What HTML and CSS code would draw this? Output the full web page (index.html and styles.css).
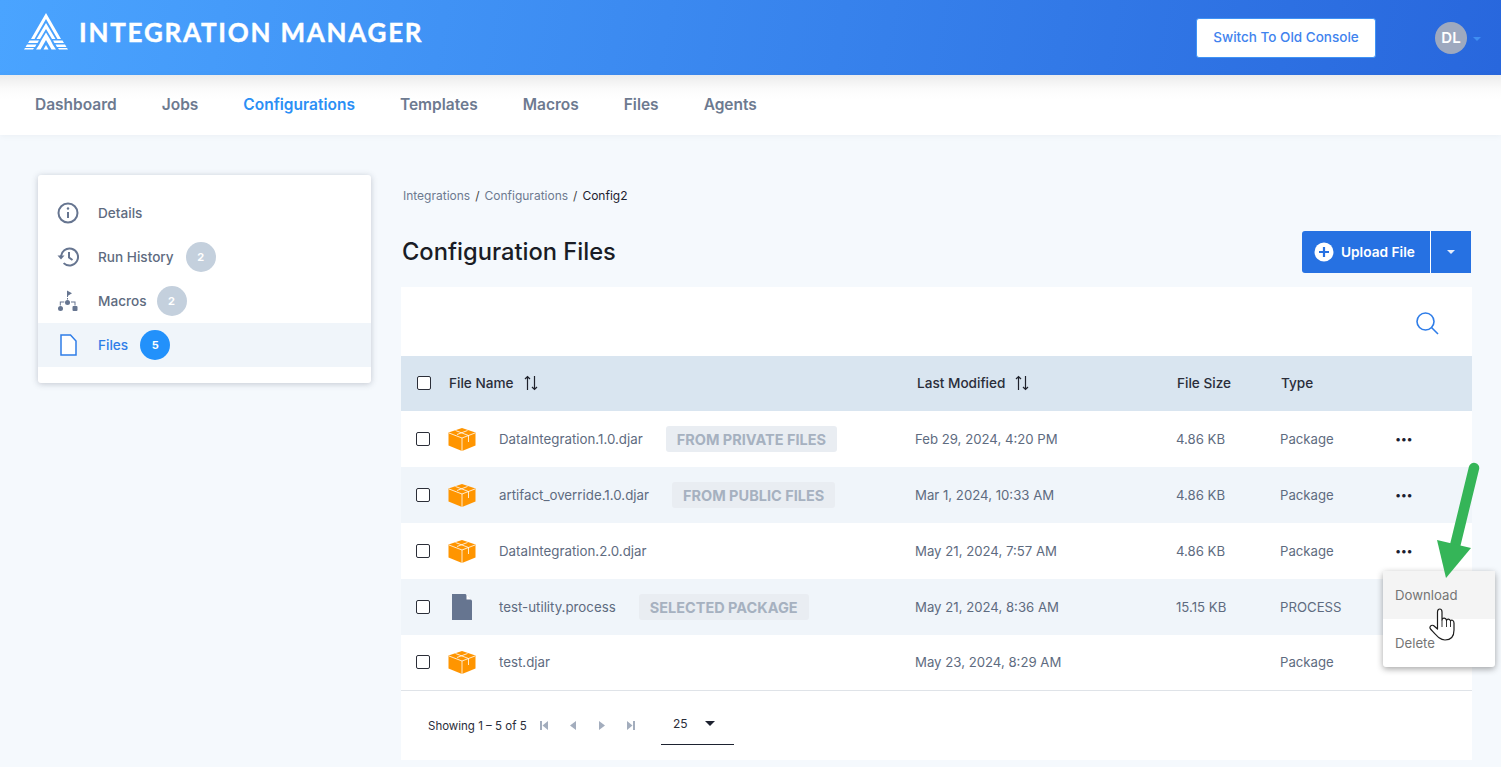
FILE: index.html
```html
<!DOCTYPE html>
<html lang="en">
<head>
<meta charset="utf-8">
<title>Integration Manager</title>
<link rel="stylesheet" href="styles.css">
</head>
<body>
<header class="topbar">
  <div class="brand">
    <svg class="brand-mark" width="44" height="38" viewBox="0 0 44 38" fill="#fff">
      <path d="M22 0 L37 26 L33.5 26 L22 6 L10.500 26 L7 26 Z"/>
      <path d="M22 10 L31.500 26 L28 26 L22 16 L16 26 L12.500 26 Z"/>
      <path d="M5.500 27.500 H15 L13.500 30 H4 Z M29 27.500 H38.500 L40 30 H30.500 Z"/>
      <path d="M3 31.500 H12.500 L11 34 H1.500 Z M31.500 31.500 H41 L42.500 34 H33 Z"/>
      <path d="M1 35 H10 L9 36.500 H0 Z M34 35 H43 L44 36.500 H35 Z"/>
      <path d="M22 19.500 L26.500 27 L29 32 L32 36.500 H27.500 L22 27 L16.500 36.500 H12 L15 32 L17.500 27 Z"/>
      <path d="M22 32 L24.500 36.500 H19.500 Z"/>
    </svg>
    <span class="brand-name">INTEGRATION MANAGER</span>
  </div>
  <div class="top-actions">
    <button class="old-console">Switch To Old Console</button>
    <div class="user">
      <span class="avatar">DL</span>
      <span class="user-caret"></span>
    </div>
  </div>
</header>

<nav class="mainnav">
  <a>Dashboard</a>
  <a>Jobs</a>
  <a class="active">Configurations</a>
  <a>Templates</a>
  <a>Macros</a>
  <a>Files</a>
  <a>Agents</a>
</nav>

<main class="page">
  <aside class="sidecard">
    <div class="side-item">
      <svg class="side-icon" width="22" height="22" viewBox="0 0 22 22" fill="none" stroke="#667590" stroke-width="2"><circle cx="11" cy="11" r="9.500"/><path d="M11 10v6"/><circle cx="11" cy="6.500" r="1.200" fill="#667590" stroke="none"/></svg>
      <span>Details</span>
    </div>
    <div class="side-item">
      <svg class="side-icon" width="22" height="22" viewBox="0 0 22 22" fill="none" stroke="#667590" stroke-width="2"><path d="M4 11a8.500 8.500 0 1 1 2.600 6.100"/><path d="M0.500 9.500 L4 13.500 L7.500 9.500" fill="#667590" stroke="none"/><path d="M12 6v5.500l3.500 2.500"/></svg>
      <span>Run History</span>
      <span class="count">2</span>
    </div>
    <div class="side-item">
      <svg class="side-icon" width="22" height="22" viewBox="0 0 22 22" fill="#667590"><path d="M10 0.500l5 2.800-4 2.400V7h-1z"/><circle cx="10.500" cy="12.500" r="2.500"/><rect x="15.500" y="16" width="5" height="5" rx="1"/><circle cx="3.500" cy="18.500" r="2.500"/><path d="M2.800 15.500v-4h4.500v1H3.800v3zM14 11.500h3.500v0h1v4h-1v-3H14zM10 8h1v1.500h-1z"/></svg>
      <span>Macros</span>
      <span class="count tight">2</span>
    </div>
    <div class="side-item selected">
      <svg class="side-icon" width="22" height="22" viewBox="0 0 22 22" fill="none" stroke="#2f7de8" stroke-width="1.500"><path d="M4 1h9.500L19 7v14H4z" fill="#fff"/></svg>
      <span>Files</span>
      <span class="count blue">5</span>
    </div>
  </aside>

  <section class="content">
    <div class="crumbs"><span>Integrations</span><i>/</i><span>Configurations</span><i>/</i><b>Config2</b></div>
    <div class="title-row">
      <h1>Configuration Files</h1>
      <div class="upload">
        <button class="upload-main">
          <svg width="20" height="20" viewBox="0 0 20 20"><circle cx="10" cy="10" r="9.500" fill="#fff"/><path d="M10 5v10M5 10h10" stroke="#2671e2" stroke-width="2.200"/></svg>
          Upload File
        </button>
        <button class="upload-caret"><span></span></button>
      </div>
    </div>

    <div class="panel">
      <div class="tools">
        <svg width="24" height="24" viewBox="0 0 24 24" fill="none" stroke="#2f7de8" stroke-width="1.600"><circle cx="10.500" cy="10.500" r="8.500"/><path d="M16.500 16.500L23 23"/></svg>
      </div>
      <div class="row head">
        <span class="check"></span>
        <span class="col-name">File Name <svg class="sort" width="16" height="16" viewBox="0 0 16 16" fill="none" stroke="#1f222c" stroke-width="1.200"><path d="M4.500 15V1.500M2 4l2.500-2.500L7 4M11.500 1v13.500M9 12l2.500 2.500L14 12"/></svg></span>
        <span class="col-mod">Last Modified <svg class="sort wide" width="16" height="16" viewBox="0 0 16 16" fill="none" stroke="#1f222c" stroke-width="1.200"><path d="M4.500 15V1.500M2 4l2.500-2.500L7 4M11.500 1v13.500M9 12l2.500 2.500L14 12"/></svg></span>
        <span>File Size</span>
        <span>Type</span>
        <span></span>
      </div>

      <div class="row">
        <span class="check"></span>
        <svg class="ficon" width="28" height="23" viewBox="0 0 28 23"><use href="#pkg"/></svg>
        <span class="name"><span>DataIntegration.1.0.djar</span><em>FROM PRIVATE FILES</em></span>
        <span>Feb 29, 2024, 4:20 PM</span><span>4.86 KB</span><span>Package</span><span class="dots">•••</span>
      </div>
      <div class="row alt">
        <span class="check"></span>
        <svg class="ficon" width="28" height="23" viewBox="0 0 28 23"><use href="#pkg"/></svg>
        <span class="name"><span>artifact_override.1.0.djar</span><em>FROM PUBLIC FILES</em></span>
        <span>Mar 1, 2024, 10:33 AM</span><span>4.86 KB</span><span>Package</span><span class="dots">•••</span>
      </div>
      <div class="row">
        <span class="check"></span>
        <svg class="ficon" width="28" height="23" viewBox="0 0 28 23"><use href="#pkg"/></svg>
        <span class="name"><span>DataIntegration.2.0.djar</span></span>
        <span>May 21, 2024, 7:57 AM</span><span>4.86 KB</span><span>Package</span><span class="dots">•••</span>
      </div>
      <div class="row alt">
        <span class="check"></span>
        <svg class="ficon doc" width="20" height="26" viewBox="0 0 20 26"><path d="M0 0h13.500L20 6.500V26H0z" fill="#667590"/><path d="M14.500 0.500L19.500 5.500H14.500z" fill="#fff"/></svg>
        <span class="name"><span>test-utility.process</span><em>SELECTED PACKAGE</em></span>
        <span>May 21, 2024, 8:36 AM</span><span>15.15 KB</span><span>PROCESS</span><span></span>
      </div>
      <div class="row last">
        <span class="check"></span>
        <svg class="ficon" width="28" height="23" viewBox="0 0 28 23"><use href="#pkg"/></svg>
        <span class="name"><span>test.djar</span></span>
        <span>May 23, 2024, 8:29 AM</span><span></span><span>Package</span><span></span>
      </div>

      <div class="pager">
        <span class="showing">Showing 1 – 5 of 5</span>
        <div class="pager-btns">
          <svg width="8" height="9" viewBox="0 0 8 9" fill="#a3adbd"><path d="M0 0h2v9H0zM8 0v9L2.500 4.500z"/></svg>
          <svg width="8" height="9" viewBox="0 0 8 9" fill="#a3adbd"><path d="M7 0v9L1 4.500z"/></svg>
          <svg width="8" height="9" viewBox="0 0 8 9" fill="#a3adbd"><path d="M1 0v9l6-4.500z"/></svg>
          <svg width="8" height="9" viewBox="0 0 8 9" fill="#a3adbd"><path d="M0 0v9l5.500-4.500zM6 0h2v9H6z"/></svg>
        </div>
        <div class="size-select"><span>25</span><i></i></div>
      </div>
    </div>
  </section>
</main>

<div class="menu">
  <div class="menu-item hover">Download</div>
  <div class="menu-item">Delete</div>
</div>

<svg class="arrow" width="46" height="124" viewBox="0 0 46 124">
  <path d="M40 12 L21 90" stroke="#35b558" stroke-width="10.500" stroke-linecap="round" fill="none"/>
  <path d="M3 84 L37 92 L12 122 Z" fill="#35b558"/>
</svg>

<svg class="hand" width="26" height="33" viewBox="0 0 26 33">
  <path d="M8.500 21 V4 C8.500 0 13 0 13 4 V12 C13.500 9.500 17 9.500 17.500 12.500 C18 10.500 21 10.500 21.500 13 C22 11.500 25 12 25 15 V22 C25 28 22 32 16 32 C11 32 8 28 1.500 21 C0 19 2 16.500 4.500 17.500 Z" fill="#fff" stroke="#1c1c1c" stroke-width="1.200" stroke-linejoin="round"/>
  <path d="M13 12v7M17.500 12.500v6.500M21.500 13v6" stroke="#1c1c1c" stroke-width=".9" fill="none"/>
</svg>

<svg class="defs" width="0" height="0">
  <defs>
    <g id="pkg">
      <path d="M14 0 L27.500 4.500 V17.500 L14 23 L0.500 17.500 V4.500 Z" fill="#ff9500"/>
      <path d="M1 5 L14 10 L27 5 M14 10 V23 M7.500 2.500 L20.500 7.500 V14 M19.500 2.500 L9 6.500" stroke="#fff" stroke-width="1" fill="none" opacity=".8"/>
    </g>
  </defs>
</svg>
</body>
</html>
```
FILE: styles.css
```css
* { box-sizing: border-box; }
html, body { margin: 0; padding: 0; }
body {
  position: relative;
  width: 1501px;
  height: 767px;
  overflow: hidden;
  background: #f5f9fd;
  font-family: "Inter", "Noto Sans", sans-serif;
  color: #5e6b80;
}
button { font-family: inherit; cursor: pointer; }

.topbar {
  height: 75px;
  display: flex;
  justify-content: space-between;
  align-items: center;
  padding: 0 20px 0 24px;
  background: linear-gradient(100deg, #4aa4ff 0%, #2867dd 100%);
}
.brand { display: flex; align-items: center; gap: 11px; margin-top: -11px; }
.brand-mark { display: block; }
.brand-name {
  font-family: "Lato", sans-serif;
  font-weight: 700;
  font-size: 26px;
  letter-spacing: 1.750px;
  color: #fff;
  line-height: 38px;
  -webkit-text-stroke: .4px #fff;
}
.top-actions { display: flex; align-items: center; }
.old-console {
  width: 180px;
  height: 40px;
  padding: 0 0 2px;
  border: 1px solid #3f93f5;
  border-radius: 3px;
  background: #fff;
  color: #3f83ee;
  font-size: 13.500px;
  font-weight: 500;
}
.user { display: flex; align-items: center; margin-left: 59px; }
.avatar {
  width: 32px;
  height: 32px;
  border-radius: 50%;
  background: #9ea9bf;
  color: #fff;
  font-size: 15px;
  font-weight: 600;
  display: flex;
  align-items: center;
  justify-content: center;
}
.user-caret {
  margin-left: 6px;
  margin-top: 2px;
  border: 4px solid transparent;
  border-top: 4px solid #3f8ef2;
  border-bottom: 0;
  width: 8px;
  height: 4px;
  box-sizing: border-box;
}

.mainnav {
  height: 60px;
  display: flex;
  align-items: center;
  gap: 45px;
  padding: 0 0 2px 35px;
  background: linear-gradient(180deg, #ececec 0, #fbfbfb 14px, #fff 24px);
  font-size: 15.500px;
  font-weight: 600;
  color: #6d7a90;
  box-shadow: 0 1px 6px rgba(60, 80, 110, .06);
}
.mainnav a { display: block; }
.mainnav .active { color: #2b8ff5; }

.page {
  display: flex;
  align-items: flex-start;
  gap: 30px;
  padding: 40px 29px 0 38px;
}

.sidecard {
  flex: none;
  width: 333px;
  height: 208px;
  padding-top: 16px;
  background: #fff;
  border-radius: 3px;
  box-shadow: 0 1px 6px rgba(60, 70, 90, .28);
  font-size: 13.600px;
  font-weight: 500;
}
.side-item {
  height: 44px;
  display: flex;
  align-items: center;
  padding-left: 19px;
}
.side-icon { flex: none; margin-right: 19px; }
.count {
  width: 30px;
  height: 30px;
  margin-left: 12px;
  border-radius: 50%;
  background: #c4d0dd;
  color: #fff;
  font-size: 11px;
  font-weight: 700;
  display: flex;
  align-items: center;
  justify-content: center;
}
.count.tight { margin-left: 10px; }
.count.blue { background: #2291fb; }
.selected { background: #f0f5fa; color: #2f7de8; }

.content { flex: 1; min-width: 0; }
.crumbs {
  display: flex;
  align-items: center;
  height: 14px;
  margin-top: 13px;
  padding-left: 2px;
  font-size: 12px;
  color: #6d7a90;
}
.crumbs i { font-style: normal; margin: 0 5px; color: #444; }
.crumbs b { font-weight: 400; color: #1d2230; }

.title-row {
  display: flex;
  justify-content: space-between;
  align-items: center;
  height: 42px;
  margin-top: 29px;
  margin-bottom: 14px;
}
h1 {
  margin: 0;
  padding: 0 0 1px 1px;
  font-size: 23.700px;
  font-weight: 500;
  color: #1a1d26;
}
.upload { display: flex; margin-right: 1px; }
.upload-main {
  display: flex;
  align-items: center;
  gap: 7px;
  width: 128px;
  height: 42px;
  padding: 0 0 0 12px;
  border: 0;
  border-radius: 3px 0 0 3px;
  background: #2671e2;
  color: #fff;
  font-size: 13.700px;
  font-weight: 600;
}
.upload-caret {
  width: 41px;
  height: 42px;
  border: 0;
  border-left: 1px solid #fff;
  background: #2671e2;
  padding: 0;
  display: flex;
  align-items: center;
  justify-content: center;
}
.upload-caret span {
  width: 0;
  height: 0;
  border: 4px solid transparent;
  border-top-color: #e6eefb;
  border-bottom: 0;
}

.panel { background: #fff; }
.tools {
  height: 69px;
  display: flex;
  align-items: center;
  justify-content: flex-end;
  padding: 2px 33px 0 0;
}
.row {
  display: grid;
  grid-template-columns: 47px 51px 416px 261px 104px 115px 77px;
  align-items: center;
  height: 56px;
  font-size: 13.200px;
}
.row > span:nth-child(n+3) { white-space: nowrap; }
.row .check {
  width: 14px;
  height: 14px;
  margin-left: 15px;
  border: 1.500px solid #2b2e38;
  border-radius: 2px;
  background: #fff;
}
.alt { background: #f0f5fa; }
.head {
  height: 55px;
  padding-bottom: 1px;
  background: #d9e5f0;
  color: #2a2d3a;
  font-weight: 500;
  font-size: 13.600px;
}
.head > span { display: flex; align-items: center; padding-left: 1px; white-space: pre; }
.head .col-name { grid-column: 2 / span 2; }
.head .col-mod { padding-left: 2px; }
.head .check { margin-left: 16px; padding: 0; }
.sort { margin-left: 6px; }
.sort.wide { margin-left: 9px; }
.last { padding-bottom: 1px; border-bottom: 1px solid #dfe3e8; }
.ficon { display: block; margin-left: 0; }
.ficon.doc { margin-left: 4px; }
.name { display: flex; align-items: center; gap: 23px; font-size: 13.300px; }
.name em {
  font-style: normal;
  height: 26px;
  display: flex;
  align-items: center;
  padding: 0 11px;
  border-radius: 3px;
  background: #e9edf2;
  color: #a6b1c0;
  font-size: 14.500px;
  font-weight: 700;
}
.dots {
  font-size: 11px;
  color: #1b2030;
  letter-spacing: -.5px;
}

.pager {
  height: 69px;
  display: flex;
  align-items: center;
  padding-left: 27px;
  color: #2a2d3a;
}
.showing { font-size: 11.500px; width: 112px; }
.pager-btns { display: flex; gap: 21px; width: 122px; }
.size-select {
  width: 73px;
  height: 42px;
  align-self: flex-start;
  margin: 12px 0 0 -1px;
  display: flex;
  align-items: center;
  gap: 17px;
  padding: 0 12px;
  border-bottom: 1px solid #1d2230;
  font-size: 12px;
}
.size-select i {
  width: 0;
  height: 0;
  border: 5px solid transparent;
  border-top-color: #1d2230;
  border-bottom: 0;
}

.menu {
  position: absolute;
  left: 1383px;
  top: 571px;
  width: 112px;
  height: 96px;
  background: #fff;
  border-radius: 3px;
  box-shadow: 0 2px 6px rgba(30, 30, 30, .4);
  font-size: 13.200px;
  color: #757575;
}
.menu-item {
  height: 48px;
  display: flex;
  align-items: center;
  padding-left: 12px;
}
.menu-item.hover { background: #f4f4f4; }
.arrow { position: absolute; left: 1434px; top: 456px; }
.hand { position: absolute; left: 1429px; top: 608px; }
.defs { position: absolute; }
```
